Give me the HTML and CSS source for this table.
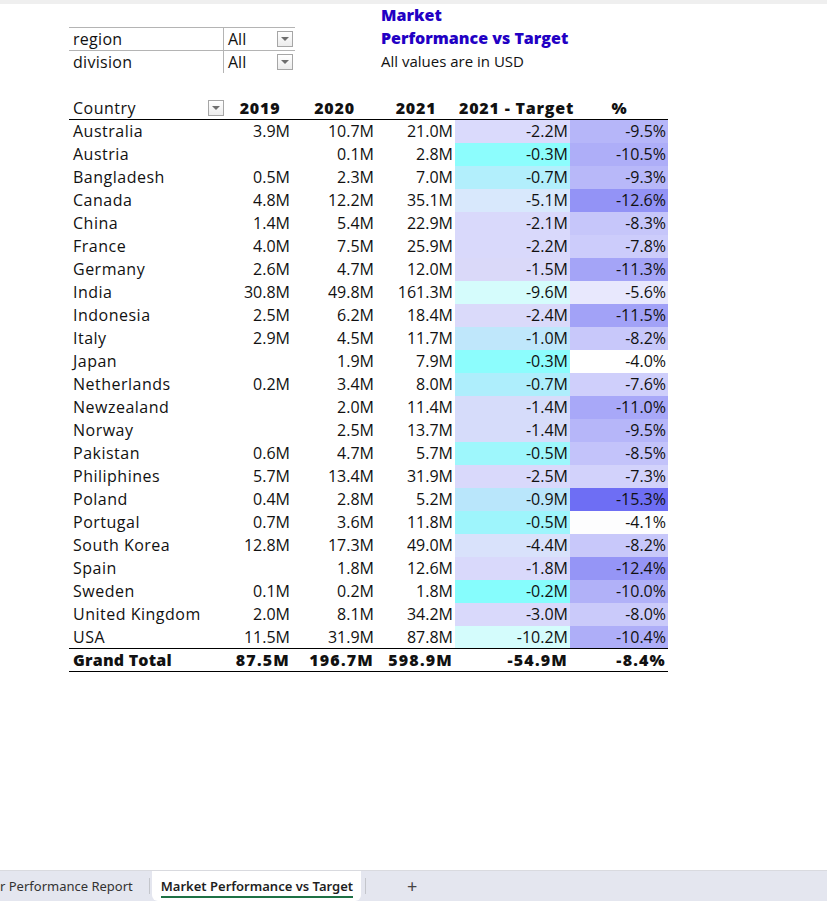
FILE: index.html
```html
<!DOCTYPE html>
<html>
<head>
<meta charset="utf-8">
<link rel="stylesheet" href="styles.css">
</head>
<body>
<div class="topbar"></div>
<div class="sheet">
  <div class="top">
    <div class="filters">
      <div class="frow">
        <div class="flabel">region</div>
        <div class="fvalue"><span>All</span><span class="dd"><svg width="8" height="5" viewBox="0 0 8 5"><path d="M0 0h8L4 4z" fill="#6e6e6e"/></svg></span></div>
      </div>
      <div class="frow">
        <div class="flabel">division</div>
        <div class="fvalue"><span>All</span><span class="dd"><svg width="8" height="5" viewBox="0 0 8 5"><path d="M0 0h8L4 4z" fill="#6e6e6e"/></svg></span></div>
      </div>
    </div>
    <div class="title">
      <div class="tline bold">Market</div>
      <div class="tline bold">Performance vs Target</div>
      <div class="tline sub">All values are in USD</div>
    </div>
  </div>
  <table class="pivot">
    <colgroup>
      <col class="c1"><col class="c2"><col class="c3"><col class="c4"><col class="c5"><col class="c6">
    </colgroup>
    <thead>
      <tr>
        <th class="country-h"><div class="chead"><span>Country</span><span class="dd"><svg width="8" height="5" viewBox="0 0 8 5"><path d="M0 0h8L4 4z" fill="#6e6e6e"/></svg></span></div></th>
        <th>2019</th><th>2020</th><th>2021</th><th>2021 - Target</th><th>%</th>
      </tr>
    </thead>
    <tbody>
      <tr><td>Australia</td><td>3.9M</td><td>10.7M</td><td>21.0M</td><td style="background:#dadafc">-2.2M</td><td style="background:#b6b6f9">-9.5%</td></tr>
      <tr><td>Austria</td><td></td><td>0.1M</td><td>2.8M</td><td style="background:#8cfdfd">-0.3M</td><td style="background:#aeaef8">-10.5%</td></tr>
      <tr><td>Bangladesh</td><td>0.5M</td><td>2.3M</td><td>7.0M</td><td style="background:#b2effc">-0.7M</td><td style="background:#b8b8f9">-9.3%</td></tr>
      <tr><td>Canada</td><td>4.8M</td><td>12.2M</td><td>35.1M</td><td style="background:#d8e8fc">-5.1M</td><td style="background:#9393f6">-12.6%</td></tr>
      <tr><td>China</td><td>1.4M</td><td>5.4M</td><td>22.9M</td><td style="background:#d9d9fb">-2.1M</td><td style="background:#c6c6fa">-8.3%</td></tr>
      <tr><td>France</td><td>4.0M</td><td>7.5M</td><td>25.9M</td><td style="background:#d9d9fb">-2.2M</td><td style="background:#ccccfb">-7.8%</td></tr>
      <tr><td>Germany</td><td>2.6M</td><td>4.7M</td><td>12.0M</td><td style="background:#dad9f9">-1.5M</td><td style="background:#a4a4f7">-11.3%</td></tr>
      <tr><td>India</td><td>30.8M</td><td>49.8M</td><td>161.3M</td><td style="background:#d5fcfc">-9.6M</td><td style="background:#e8e8fd">-5.6%</td></tr>
      <tr><td>Indonesia</td><td>2.5M</td><td>6.2M</td><td>18.4M</td><td style="background:#dadafa">-2.4M</td><td style="background:#a2a2f7">-11.5%</td></tr>
      <tr><td>Italy</td><td>2.9M</td><td>4.5M</td><td>11.7M</td><td style="background:#bfe7fb">-1.0M</td><td style="background:#c8c8fa">-8.2%</td></tr>
      <tr><td>Japan</td><td></td><td>1.9M</td><td>7.9M</td><td style="background:#8cfdfd">-0.3M</td><td style="background:#ffffff">-4.0%</td></tr>
      <tr><td>Netherlands</td><td>0.2M</td><td>3.4M</td><td>8.0M</td><td style="background:#aeeefc">-0.7M</td><td style="background:#cfcffb">-7.6%</td></tr>
      <tr><td>Newzealand</td><td></td><td>2.0M</td><td>11.4M</td><td style="background:#d6dcfa">-1.4M</td><td style="background:#a8a8f8">-11.0%</td></tr>
      <tr><td>Norway</td><td></td><td>2.5M</td><td>13.7M</td><td style="background:#d6dcfa">-1.4M</td><td style="background:#b6b6f9">-9.5%</td></tr>
      <tr><td>Pakistan</td><td>0.6M</td><td>4.7M</td><td>5.7M</td><td style="background:#9ef7fc">-0.5M</td><td style="background:#c3c3fa">-8.5%</td></tr>
      <tr><td>Philiphines</td><td>5.7M</td><td>13.4M</td><td>31.9M</td><td style="background:#d9d9fb">-2.5M</td><td style="background:#d2d2fb">-7.3%</td></tr>
      <tr><td>Poland</td><td>0.4M</td><td>2.8M</td><td>5.2M</td><td style="background:#b9e6fb">-0.9M</td><td style="background:#6e6ef4">-15.3%</td></tr>
      <tr><td>Portugal</td><td>0.7M</td><td>3.6M</td><td>11.8M</td><td style="background:#9ef5fc">-0.5M</td><td style="background:#fdfdfe">-4.1%</td></tr>
      <tr><td>South Korea</td><td>12.8M</td><td>17.3M</td><td>49.0M</td><td style="background:#d9e2fb">-4.4M</td><td style="background:#c8c8fa">-8.2%</td></tr>
      <tr><td>Spain</td><td></td><td>1.8M</td><td>12.6M</td><td style="background:#d9d9fb">-1.8M</td><td style="background:#9595f6">-12.4%</td></tr>
      <tr><td>Sweden</td><td>0.1M</td><td>0.2M</td><td>1.8M</td><td style="background:#86fdfd">-0.2M</td><td style="background:#b1b1f8">-10.0%</td></tr>
      <tr><td>United Kingdom</td><td>2.0M</td><td>8.1M</td><td>34.2M</td><td style="background:#d9d9fb">-3.0M</td><td style="background:#cacafa">-8.0%</td></tr>
      <tr><td>USA</td><td>11.5M</td><td>31.9M</td><td>87.8M</td><td style="background:#d4fcfc">-10.2M</td><td style="background:#aeaef8">-10.4%</td></tr>
    </tbody>
    <tfoot>
      <tr><td>Grand Total</td><td>87.5M</td><td>196.7M</td><td>598.9M</td><td>-54.9M</td><td>-8.4%</td></tr>
    </tfoot>
  </table>
</div>
<div class="tabbar">
  <div class="tab first">r Performance Report</div>
  <div class="sep"></div>
  <div class="tab active"><span class="tabtext">Market Performance vs Target</span></div>
  <div class="sep"></div>
  <div class="plus">+</div>
</div>
</body>
</html>
```

FILE: styles.css
```css
html, body {
  margin: 0;
  padding: 0;
  background: #ffffff;
}
body {
  font-family: "Open Sans", "Liberation Sans", sans-serif;
  font-size: 16px;
  color: #111111;
  width: 827px;
  height: 901px;
  position: relative;
  overflow: hidden;
}
.topbar {
  height: 4px;
  background: #efefef;
}
.sheet {
  padding-left: 69px;
}
.top {
  display: flex;
  height: 92px;
}
.filters {
  margin-top: 23px;
  width: 226px;
}
.frow {
  display: flex;
  height: 23px;
  border-top: 1px solid #b4b4b4;
  box-sizing: border-box;
}
.flabel {
  width: 155px;
  padding-left: 4px;
  box-sizing: border-box;
  border-right: 1px solid #b4b4b4;
  line-height: 22px;
  letter-spacing: 0.3px;
}
.fvalue {
  flex: 1;
  display: flex;
  align-items: center;
  padding-left: 4px;
  padding-right: 2px;
  line-height: 22px;
}
.fvalue .dd {
  margin-left: auto;
}
.dd {
  width: 16px;
  height: 16px;
  box-sizing: border-box;
  border: 1px solid #a6a6a6;
  background: linear-gradient(#ffffff, #ececec);
  display: flex;
  align-items: center;
  justify-content: center;
}
.title {
  margin-left: 86px;
}
.tline {
  height: 23px;
  line-height: 23px;
  white-space: nowrap;
}
.tline.bold {
  font-weight: 800;
  font-size: 16px;
  color: #2200c4;
}
.tline.sub {
  font-size: 15px;
  color: #111111;
}
.pivot {
  border-collapse: collapse;
  table-layout: fixed;
  width: 599px;
}
.c1 { width: 158px; }
.c2 { width: 65px; }
.c3 { width: 84px; }
.c4 { width: 79px; }
.c5 { width: 115px; }
.c6 { width: 98px; }
.pivot th, .pivot td {
  height: 23px;
  padding: 0 3px 0 4px;
  box-sizing: border-box;
  white-space: nowrap;
  line-height: 22px;
}
.pivot th {
  font-weight: 800;
  letter-spacing: 0.8px;
  text-align: center;
  border-bottom: 1px solid #000000;
  height: 23px;
  padding-top: 1px;
}
.pivot th.country-h {
  text-align: left;
  padding-right: 3px;
  letter-spacing: 0.5px;
}
.chead {
  display: flex;
  align-items: center;
  font-weight: 400;
}
.chead .dd {
  margin-left: auto;
}
.pivot td {
  text-align: right;
  padding-right: 2px;
}
.pivot td:first-child {
  text-align: left;
  letter-spacing: 0.5px;
}
.pivot tfoot td {
  font-weight: 800;
  letter-spacing: 1.2px;
  border-top: 1px solid #000000;
  border-bottom: 1px solid #000000;
}
.pivot tfoot td:first-child {
  letter-spacing: 0.2px;
}
.tabbar {
  position: absolute;
  left: 0;
  right: 0;
  bottom: 0;
  height: 30px;
  background: #e4e6ef;
  border-top: 1px solid #d9dadf;
  display: flex;
  align-items: stretch;
  font-family: "Noto Sans", "Open Sans", sans-serif;
  font-size: 13px;
  color: #333333;
}
.tab {
  display: flex;
  align-items: center;
  white-space: nowrap;
}
.tab.first {
  padding-right: 16px;
}
.sep {
  width: 1px;
  height: 16px;
  background: #c4c6cc;
  align-self: center;
}
.tab.active {
  background: #ffffff;
  margin: 0 4px 0 2px;
  padding: 0 8px 0 9px;
  border-radius: 0 0 6px 6px;
  font-weight: 600;
  color: #1f1f1f;
}
.tabtext {
  border-bottom: 2px solid #1e7145;
  padding-bottom: 1px;
  margin-top: 2px;
}
.plus {
  margin-left: 41px;
  display: flex;
  align-items: center;
  font-size: 18px;
  color: #444444;
}
```
